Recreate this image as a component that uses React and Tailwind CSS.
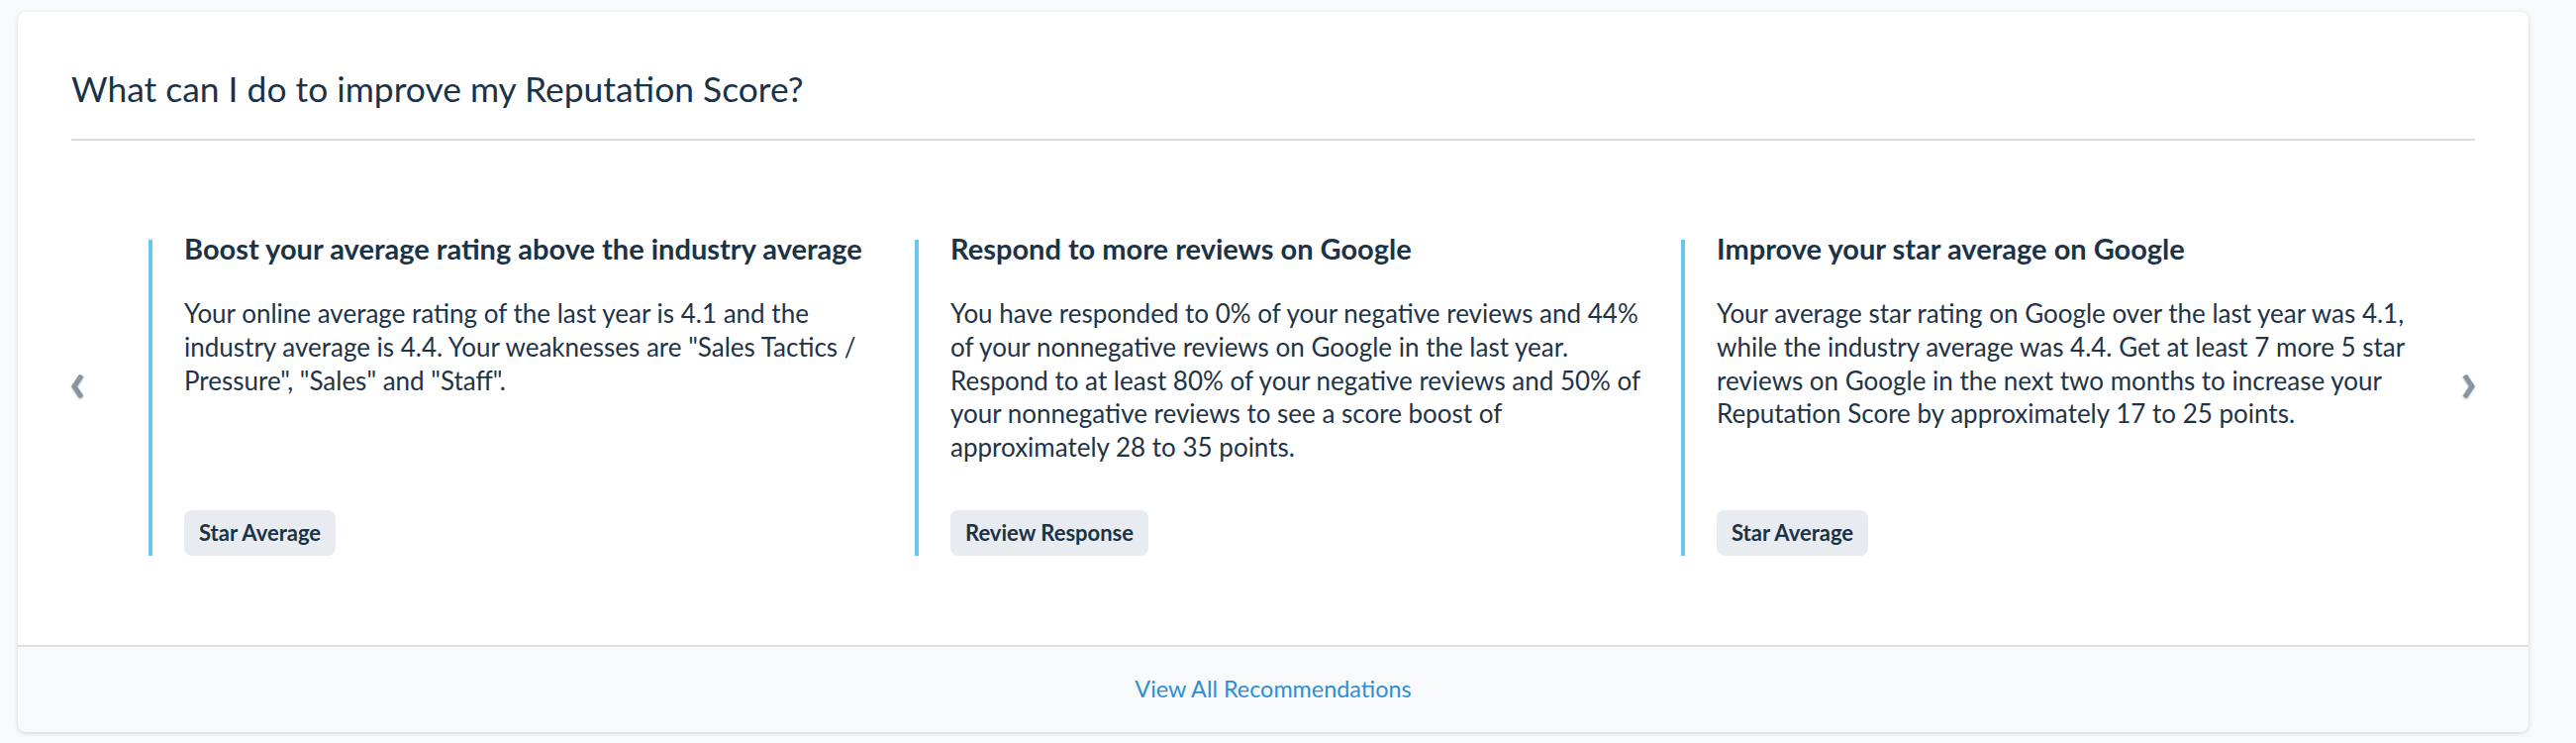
import React from 'react';

const recommendations = [
  {
    title: 'Boost your average rating above the industry average',
    body: 'Your online average rating of the last year is 4.1 and the industry average is 4.4. Your weaknesses are "Sales Tactics / Pressure", "Sales" and "Staff".',
    tag: 'Star Average',
  },
  {
    title: 'Respond to more reviews on Google',
    body: 'You have responded to 0% of your negative reviews and 44% of your nonnegative reviews on Google in the last year. Respond to at least 80% of your negative reviews and 50% of your nonnegative reviews to see a score boost of approximately 28 to 35 points.',
    tag: 'Review Response',
  },
  {
    title: 'Improve your star average on Google',
    body: 'Your average star rating on Google over the last year was 4.1, while the industry average was 4.4. Get at least 7 more 5 star reviews on Google in the next two months to increase your Reputation Score by approximately 17 to 25 points.',
    tag: 'Star Average',
  },
];

function Chevron({ dir }) {
  const points = dir === 'left' ? '11,3 5,12 11,21' : '5,3 11,12 5,21';
  return (
    <svg width="16" height="24" viewBox="0 0 16 24" className="drop-shadow-[0_1px_1px_rgba(0,0,0,0.25)]">
      <polyline points={points} fill="none" stroke="#8795a1" strokeWidth="5" strokeLinecap="square" strokeLinejoin="miter" />
    </svg>
  );
}

function RecommendationCard({ rec }) {
  return (
    <div className="w-[774px] shrink-0 flex flex-col border-l-4 border-[#6ac6ef] pl-[32px] pr-[18px]">
      <h3 className="-mt-[8px] text-[29px] leading-[34px] font-bold text-[#1b3347]">{rec.title}</h3>
      <div className="flex-1 mt-[32px]">
        <p className="text-[26px] leading-[33.75px] text-[#1f3447]">{rec.body}</p>
      </div>
      <div className="mt-[46px]">
        <span className="inline-flex items-center h-[46px] px-[15px] rounded-[8px] bg-[#e8ebef] text-[22px] font-bold text-[#1b3347]">
          {rec.tag}
        </span>
      </div>
    </div>
  );
}

export default function App() {
  return (
    <div className="min-h-screen bg-[#f8f9fb] pt-[12px] pl-[18px] font-[Lato,sans-serif]">
      <div className="w-[2536px] rounded-[8px] bg-white overflow-hidden shadow-[0_1px_4px_rgba(0,0,0,0.16)]">
        <div className="px-[54px] pt-[56px] pb-[90px]">
          <h2 className="text-[35.4px] leading-[43px] text-[#1a3349]">What can I do to improve my Reputation Score?</h2>
          <div className="mt-[29px] h-[2px] bg-[#d8dde2]" />

          <div className="mt-[100px] flex items-stretch">
            <div className="w-[80px] shrink-0 self-start mt-[136px] -ml-[2px]">
              <Chevron dir="left" />
            </div>
            {recommendations.map((rec, i) => (
              <RecommendationCard key={i} rec={rec} />
            ))}
            <div className="flex-1 self-start flex justify-end mt-[136px] -mr-[2px]">
              <Chevron dir="right" />
            </div>
          </div>
        </div>

        <div className="h-[88px] border-t-2 border-[#dde1e6] bg-[#f8f9fb] flex items-center justify-center">
          <a className="text-[23.4px] text-[#2d8fd5] cursor-pointer">View All Recommendations</a>
        </div>
      </div>
    </div>
  );
}
